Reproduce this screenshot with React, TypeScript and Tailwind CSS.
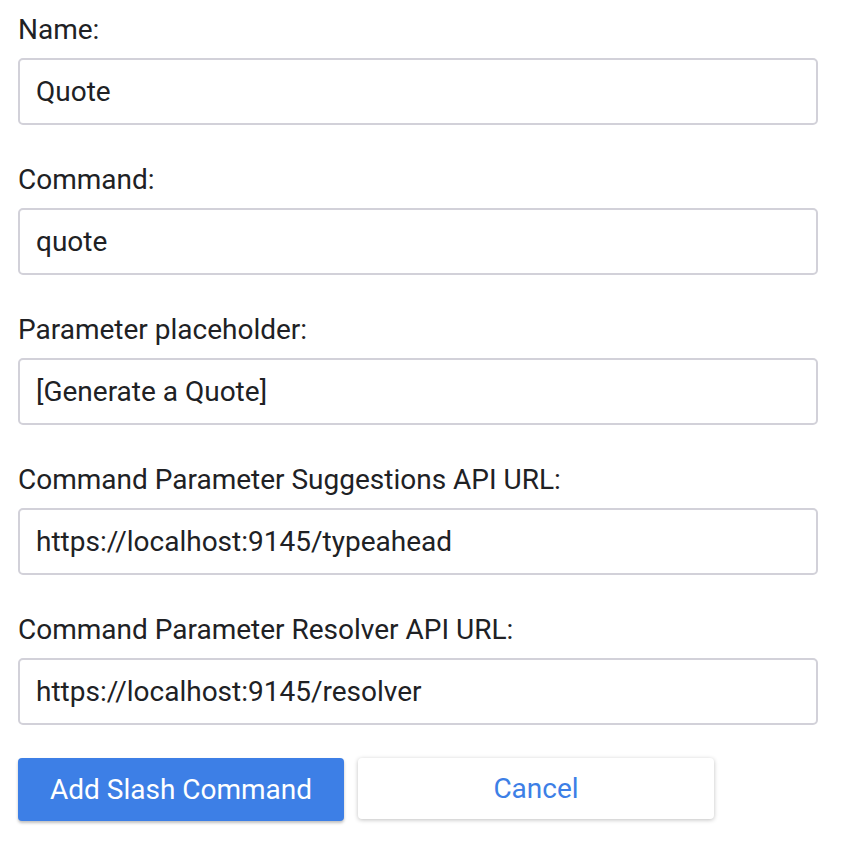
const fields = [
  { label: "Name:", value: "Quote" },
  { label: "Command:", value: "quote" },
  { label: "Parameter placeholder:", value: "[Generate a Quote]" },
  { label: "Command Parameter Suggestions API URL:", value: "https://localhost:9145/typeahead" },
  { label: "Command Parameter Resolver API URL:", value: "https://localhost:9145/resolver" },
];

export default function App() {
  return (
    <div className="min-h-screen bg-white pl-[18px] pt-[15px] text-[#202124]" style={{ fontFamily: "Roboto, 'Liberation Sans', sans-serif" }}>
      <form className="w-[800px]">
        {fields.map((f, i) => (
          <div key={f.label} className={i === fields.length - 1 ? "mb-[33px]" : "mb-[40px]"}>
            <label className="block text-[28px] leading-[30px] mb-[13px]">{f.label}</label>
            <input
              readOnly
              value={f.value}
              className="block w-full h-[67px] rounded-[5px] border-2 border-[#d2d1d9] px-[16px] text-[28px] text-[#202124] outline-none"
            />
          </div>
        ))}
        <div className="flex gap-[14px] items-start">
          <button type="button" className="w-[326px] h-[63px] rounded-[4px] bg-[#3d7fe6] text-white text-[28px] shadow-[0_2px_3px_rgba(0,0,0,0.25)]">
            Add Slash Command
          </button>
          <button type="button" className="w-[356px] h-[61px] rounded-[4px] bg-white text-[#3d7fe6] text-[28px] shadow-[0_1px_4px_rgba(0,0,0,0.25)]">
            Cancel
          </button>
        </div>
      </form>
    </div>
  );
}
